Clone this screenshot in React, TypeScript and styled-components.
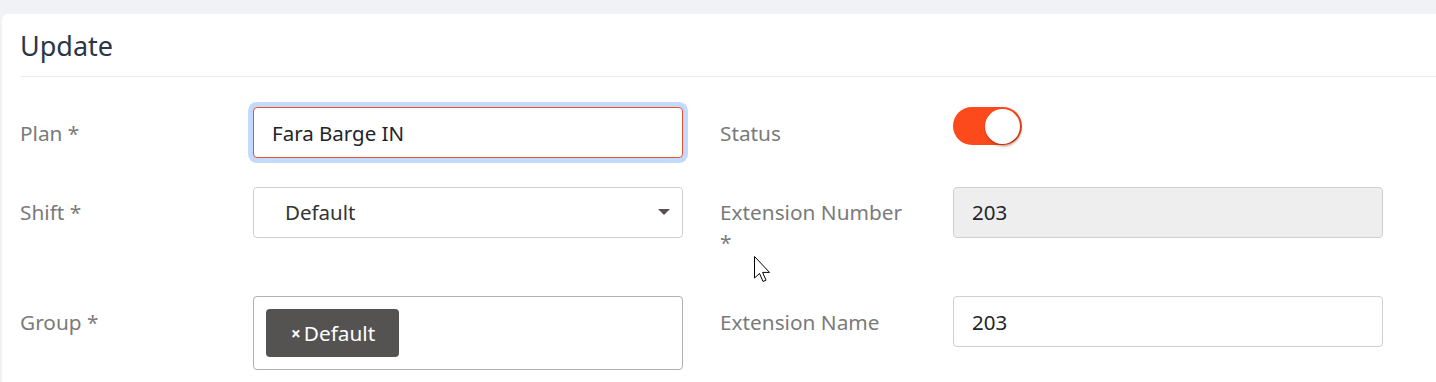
import React from 'react'
import styled, { createGlobalStyle } from 'styled-components'

const GlobalStyle = createGlobalStyle`
  html,
  body {
    margin: 0;
    padding: 0;
    background: #f0f2f5;
    overflow: hidden;
  }

  body {
    font-family: 'Noto Sans', 'Open Sans', sans-serif;
  }
`

const Page = styled.div`
  position: relative;
  height: 382px;
  box-sizing: border-box;
  padding: 14px 0 0 2px;
  overflow: hidden;
`

const Card = styled.section`
  width: 1470px;
  height: 368px;
  box-sizing: border-box;
  padding-left: 18px;
  background: #fff;
  border-radius: 6px 0 0 0;
`

const CardHeader = styled.div`
  display: flex;
  align-items: center;
  height: 62px;
  border-bottom: 1px solid #e9ecef;
`

const Title = styled.h4`
  margin: 0;
  font-size: 27px;
  font-weight: 400;
  color: #2b3648;
`

const FormGrid = styled.div`
  display: grid;
  grid-template-columns: 663px 663px;
  column-gap: 37px;
  row-gap: 28px;
  align-items: start;
  padding-top: 30px;
`

const Field = styled.div`
  display: grid;
  grid-template-columns: 233px 430px;
  align-items: start;
`

const Label = styled.label`
  padding: 10.5px 44px 11px 0;
  font-size: 20.8px;
  line-height: 30px;
  color: #7a7a7a;
`

const Input = styled.div<{ $focused?: boolean; $disabled?: boolean }>`
  display: flex;
  align-items: center;
  height: 51px;
  box-sizing: border-box;
  padding: 0 18px;
  border: 1px solid ${({ $focused }) => ($focused ? '#e8522f' : '#cfcfcf')};
  border-radius: 4px;
  background: ${({ $disabled }) => ($disabled ? '#eeeeee' : '#fff')};
  box-shadow: ${({ $focused }) => ($focused ? '0 0 0 5px #c3dafe' : 'none')};
  font-size: 20.5px;
  color: #212529;
`

const Select = styled(Input)`
  justify-content: space-between;
  padding: 0 12px 0 31px;
  color: #333;
`

const Caret = styled.span`
  width: 0;
  height: 0;
  border-left: 6px solid transparent;
  border-right: 6px solid transparent;
  border-top: 6px solid #5a5252;
`

const TagBox = styled.div`
  display: flex;
  flex-wrap: wrap;
  gap: 6px;
  padding: 12px;
  border: 1px solid #b0b0b0;
  border-radius: 4px;
`

const Tag = styled.span`
  display: inline-flex;
  align-items: center;
  gap: 3px;
  height: 48px;
  padding: 0 24px 0 25px;
  border-radius: 4px;
  background: #545351;
  color: #fff;
  font-size: 20.8px;
`

const TagRemove = styled.span`
  font-size: 17px;
  font-weight: 700;
`

const Switch = styled.span<{ $on?: boolean }>`
  display: flex;
  justify-content: ${({ $on }) => ($on ? 'flex-end' : 'flex-start')};
  align-items: center;
  width: 69px;
  height: 38px;
  box-sizing: border-box;
  padding: 0 2px;
  border-radius: 19px;
  background: ${({ $on }) => ($on ? '#fd4a1c' : '#ccc')};
`

const Knob = styled.span`
  width: 35px;
  height: 35px;
  border-radius: 50%;
  background: #fff;
  box-shadow: 1px 2px 3px rgba(120, 30, 0, 0.55);
`

const Pointer = styled.svg`
  position: absolute;
  left: 753px;
  top: 255px;
`

export default function App() {
  return (
    <Page>
      <GlobalStyle />
      <Card>
        <CardHeader>
          <Title>Update</Title>
        </CardHeader>
        <FormGrid>
          <Field>
            <Label>Plan *</Label>
            <Input $focused>Fara Barge IN</Input>
          </Field>
          <Field>
            <Label>Status</Label>
            <Switch $on>
              <Knob />
            </Switch>
          </Field>
          <Field>
            <Label>Shift *</Label>
            <Select>
              Default
              <Caret />
            </Select>
          </Field>
          <Field>
            <Label>Extension Number *</Label>
            <Input $disabled>203</Input>
          </Field>
          <Field>
            <Label>Group *</Label>
            <TagBox>
              <Tag>
                <TagRemove>×</TagRemove>Default
              </Tag>
            </TagBox>
          </Field>
          <Field>
            <Label>Extension Name</Label>
            <Input>203</Input>
          </Field>
        </FormGrid>
      </Card>
      <Pointer width="20" height="29" viewBox="0 0 20 29">
        <path
          d="M1.5 1.5 L1.5 23 L6.5 18.5 L10 26.5 L13 25.2 L9.6 17.4 L16.5 17.4 Z"
          fill="#fff"
          stroke="#000"
          strokeWidth="1"
          strokeLinejoin="round"
        />
      </Pointer>
    </Page>
  )
}
